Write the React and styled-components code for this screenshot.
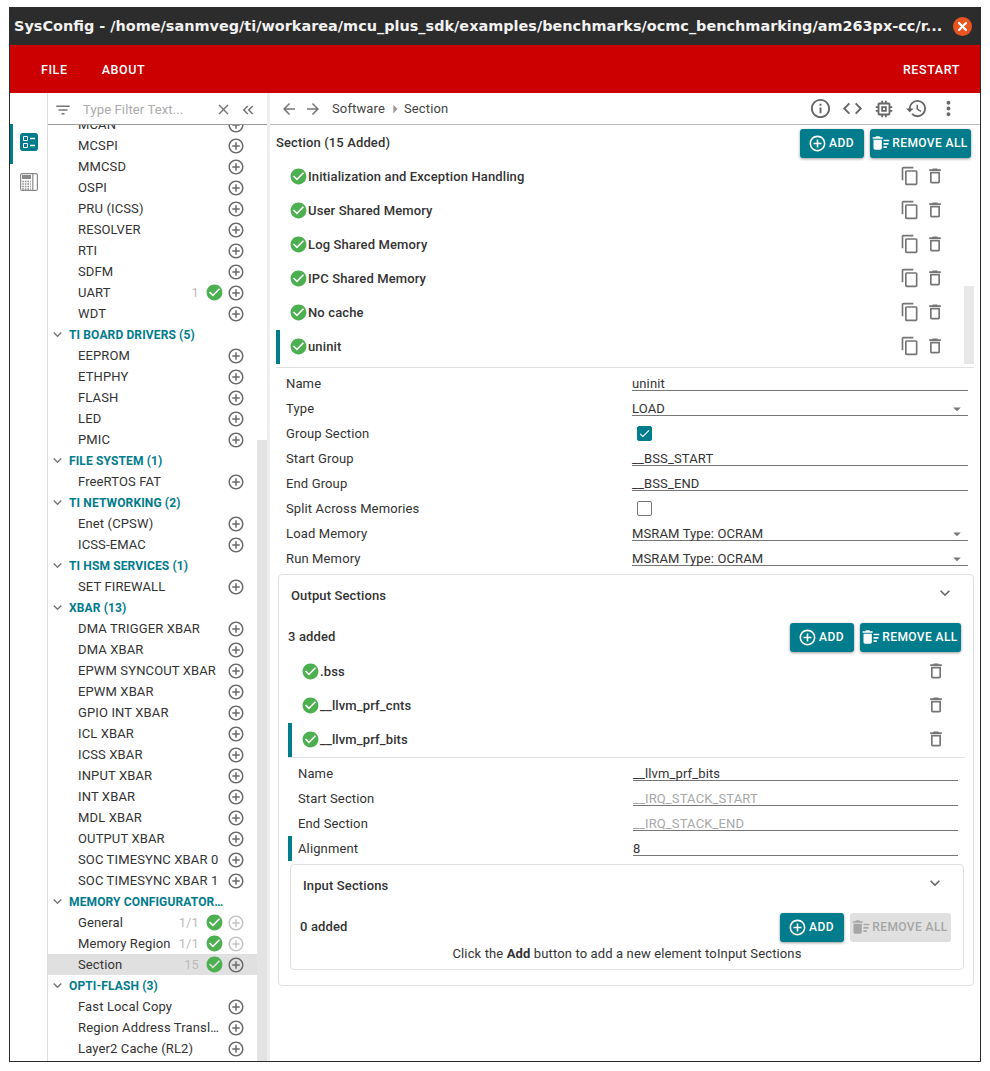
import React from "react";
import styled, { createGlobalStyle } from "styled-components";
import {
  MdArrowBack,
  MdArrowDropDown,
  MdArrowForward,
  MdArrowRight,
  MdCheck,
  MdCheckCircle,
  MdClose,
  MdCode,
  MdContentCopy,
  MdControlPoint,
  MdDeleteSweep,
  MdExpandMore,
  MdFilterList,
  MdInfoOutline,
  MdKeyboardDoubleArrowLeft,
  MdMemory,
  MdMoreVert,
  MdOutlineDelete,
  MdRestore,
} from "react-icons/md";

const TEAL = "#007c8c";

const GlobalStyle = createGlobalStyle`
  html, body { margin: 0; padding: 0; background: #fff; }
  body { font-family: Roboto, "Liberation Sans", sans-serif; color: #333; font-size: 13px; letter-spacing: 0.13px; }
  * { box-sizing: border-box; }
`;

const tree = [
  { name: "MCAN" }, { name: "MCSPI" }, { name: "MMCSD" }, { name: "OSPI" }, { name: "PRU (ICSS)" },
  { name: "RESOLVER" }, { name: "RTI" }, { name: "SDFM" }, { name: "UART", count: "1", ok: true }, { name: "WDT" },
  { group: "TI BOARD DRIVERS (5)" },
  { name: "EEPROM" }, { name: "ETHPHY" }, { name: "FLASH" }, { name: "LED" }, { name: "PMIC" },
  { group: "FILE SYSTEM (1)" },
  { name: "FreeRTOS FAT" },
  { group: "TI NETWORKING (2)" },
  { name: "Enet (CPSW)" }, { name: "ICSS-EMAC" },
  { group: "TI HSM SERVICES (1)" },
  { name: "SET FIREWALL" },
  { group: "XBAR (13)" },
  { name: "DMA TRIGGER XBAR" }, { name: "DMA XBAR" }, { name: "EPWM SYNCOUT XBAR" }, { name: "EPWM XBAR" },
  { name: "GPIO INT XBAR" }, { name: "ICL XBAR" }, { name: "ICSS XBAR" }, { name: "INPUT XBAR" },
  { name: "INT XBAR" }, { name: "MDL XBAR" }, { name: "OUTPUT XBAR" }, { name: "SOC TIMESYNC XBAR 0" },
  { name: "SOC TIMESYNC XBAR 1" },
  { group: "MEMORY CONFIGURATOR…" },
  { name: "General", count: "1/1", ok: true, off: true },
  { name: "Memory Region", count: "1/1", ok: true, off: true },
  { name: "Section", count: "15", ok: true, selected: true },
  { group: "OPTI-FLASH (3)" },
  { name: "Fast Local Copy" }, { name: "Region Address Transl…" }, { name: "Layer2 Cache (RL2)" },
];

const sections = [
  "Initialization and Exception Handling",
  "User Shared Memory",
  "Log Shared Memory",
  "IPC Shared Memory",
  "No cache",
  "uninit",
];

const Window = styled.div`
  margin: 7px 0 0 9px;
  width: 972px;
  height: 1055px;
  border: 1px solid #2c2c2c;
  border-top: none;
  display: flex;
  flex-direction: column;
  overflow: hidden;
`;

const TitleBar = styled.div`
  height: 38px;
  margin: 0 -1px;
  background: #2c2c2c;
  color: #f2f2f2;
  display: flex;
  align-items: center;
  justify-content: space-between;
  padding: 0 9px 0 5px;
  font-family: "DejaVu Sans", sans-serif;
  font-weight: 700;
  font-size: 14.45px;
  letter-spacing: 0;
  white-space: nowrap;
`;

const CloseDot = styled.span`
  width: 19px;
  height: 19px;
  border-radius: 50%;
  background: #e95420;
  display: flex;
  align-items: center;
  justify-content: center;
`;

const MenuBar = styled.div`
  height: 48px;
  background: #cc0000;
  color: #fff;
  display: flex;
  align-items: center;
  padding: 0 20px 0 31px;
  font-weight: 500;
  font-size: 12.5px;
  letter-spacing: 0.6px;
`;

const MenuItem = styled.span`
  margin-right: 34px;
  margin-left: ${(p) => (p.$right ? "auto" : "0")};
  ${(p) => p.$right && "margin-right: 0;"}
`;

const Body = styled.div`
  flex: 1;
  display: flex;
  min-height: 0;
`;

const Rail = styled.div`
  width: 38px;
  border-right: 1px solid #ddd;
  padding-top: 31px;
  flex-shrink: 0;
`;

const RailItem = styled.div`
  height: 40px;
  display: flex;
  align-items: center;
  justify-content: center;
  border-left: 3px solid ${(p) => (p.$active ? TEAL : "transparent")};
  padding: 0 2px 4px 0;
`;

const TreePanel = styled.div`
  width: 222px;
  border-right: 3px solid #eee;
  display: flex;
  flex-direction: column;
  flex-shrink: 0;
  min-height: 0;
`;

const FilterBar = styled.div`
  height: 32px;
  border-bottom: 1px solid #999;
  display: flex;
  align-items: center;
  padding: 2px 10px 0 6px;
  color: #757575;
  flex-shrink: 0;
`;

const FilterHint = styled.span`
  flex: 1;
  margin-left: 11px;
  color: #aaa;
  font-size: 13px;
`;

const TreeBody = styled.div`
  flex: 1;
  display: flex;
  overflow: hidden;
  min-height: 0;
`;

const TreeList = styled.div`
  flex: 1;
  margin-top: -11px;
  min-width: 0;
`;

const TreeGroup = styled.div`
  height: 21px;
  display: flex;
  align-items: center;
  padding-left: 1px;
  color: ${TEAL};
  font-weight: 700;
  font-size: 12px;
  white-space: nowrap;
  svg { color: #777; margin-right: 3px; }
`;

const TreeRow = styled.div`
  height: 21px;
  display: flex;
  align-items: center;
  padding-left: 30px;
  background: ${(p) => (p.$selected ? "#e0e0e0" : "transparent")};
  white-space: nowrap;
  font-size: 13px;
  color: #333;
`;

const TreeName = styled.span`
  flex: 1;
`;

const TreeCount = styled.span`
  color: #bbb;
  margin-right: 6px;
`;

const TreeAdd = styled.span`
  width: 20px;
  margin: 0 11px 0 2px;
  display: flex;
  justify-content: center;
  color: ${(p) => (p.$off ? "#c4c4c4" : "#6a6a6a")};
`;

const ScrollTrack = styled.div`
  width: 10px;
  flex-shrink: 0;
  padding-top: ${(p) => p.$top}px;
  display: flex;
`;

const ScrollThumb = styled.div`
  width: 10px;
  background: #e3e3e3;
`;

const Main = styled.div`
  flex: 1;
  min-width: 0;
  display: flex;
  flex-direction: column;
`;

const NavBar = styled.div`
  height: 32px;
  border-bottom: 1px solid #bbb;
  display: flex;
  align-items: center;
  padding: 0 20px 0 10px;
  color: #757575;
  flex-shrink: 0;
`;

const Crumb = styled.span`
  color: #444;
  font-size: 13px;
`;

const NavIcons = styled.div`
  margin-left: auto;
  display: flex;
  gap: 8px;
  align-items: center;
`;

const NavIcon = styled.span`
  width: 24px;
  display: flex;
  justify-content: center;
  color: #666;
`;

const Content = styled.div`
  padding-left: 6px;
  padding-right: 6px;
`;

const ListHeader = styled.div`
  display: flex;
  align-items: center;
  height: ${(p) => p.$height}px;
  gap: 6px;
  padding-right: ${(p) => p.$right || 3}px;
  padding-left: ${(p) => p.$left || 0}px;
  padding-top: 2px;
`;

const HeaderTitle = styled.div`
  flex: 1;
  font-weight: 500;
  font-size: 13px;
  color: #333;
  margin-top: -3px;
`;

const Button = styled.div`
  height: 29px;
  width: ${(p) => p.$width}px;
  border-radius: 3px;
  background: ${(p) => (p.$disabled ? "#e0e0e0" : TEAL)};
  color: ${(p) => (p.$disabled ? "#a6a6a6" : "#fff")};
  box-shadow: ${(p) => (p.$disabled ? "none" : "0 1px 3px rgba(0,0,0,.4)")};
  display: flex;
  align-items: center;
  justify-content: center;
  gap: ${(p) => p.$gap}px;
  padding: 0 ${(p) => p.$pad}px 1px 0;
  font-weight: 500;
  font-size: 12px;
  letter-spacing: 0.4px;
  white-space: nowrap;
`;

const Rows = styled.div`
  position: relative;
  margin: ${(p) => p.$margin || 0};
`;

const ItemRow = styled.div`
  height: 34px;
  display: flex;
  align-items: center;
  border-left: 4px solid ${(p) => (p.$active ? TEAL : "transparent")};
  padding-left: ${(p) => p.$indent}px;
  padding-right: ${(p) => p.$right}px;
  padding-bottom: 2px;
  font-weight: 500;
  font-size: 13px;
  color: #333;
`;

const ItemName = styled.span`
  flex: 1;
`;

const ItemActions = styled.div`
  display: flex;
  align-items: center;
  gap: 5px;
  color: #757575;
`;

const ListScrollThumb = styled.div`
  position: absolute;
  right: 0;
  top: 126px;
  bottom: 0;
  width: 10px;
  background: #e8e8e8;
`;

const Divider = styled.div`
  border-bottom: 1px solid #e0e0e0;
  margin: ${(p) => p.$margin};
`;

const FormRow = styled.div`
  height: 25px;
  display: grid;
  grid-template-columns: ${(p) => p.$label}px 1fr;
  padding-left: ${(p) => p.$left}px;
  padding-right: ${(p) => p.$right}px;
  margin-left: ${(p) => p.$offset || 0}px;
  align-items: center;
  font-size: 13px;
  color: #333;
  border-left: ${(p) => (p.$active ? `4px solid ${TEAL}` : "none")};
`;

const Field = styled.div`
  align-self: start;
  height: 20px;
  border-bottom: 1px solid #777;
  display: flex;
  align-items: flex-end;
  justify-content: space-between;
  line-height: 13px;
  color: ${(p) => (p.$muted ? "#a8a8a8" : "#333")};
  font-size: 13px;
  svg { color: #777; margin: 0 2px 0 0; align-self: flex-start; position: relative; top: 4px; }
`;

const Checked = styled.span`
  width: 15px;
  height: 15px;
  margin-left: 5px;
  border-radius: 2px;
  background: ${(p) => (p.$on ? TEAL : "#fff")};
  border: 1.5px solid ${(p) => (p.$on ? TEAL : "#757575")};
  color: #fff;
  display: flex;
  align-items: center;
  justify-content: center;
`;

const Card = styled.div`
  border: 1px solid #e0e0e0;
  border-radius: 4px;
  margin: ${(p) => p.$margin};
  height: ${(p) => p.$height}px;
`;

const CardHeader = styled.div`
  height: 40px;
  display: flex;
  align-items: center;
  justify-content: space-between;
  padding: 0 18px 0 12px;
  font-weight: 500;
  font-size: 13px;
  color: #333;
  svg { color: #666; margin-top: -4px; }
`;

const EmptyNote = styled.div`
  text-align: center;
  font-size: 13px;
  line-height: 15px;
  color: #333;
  margin-top: -2px;
  b { font-weight: 700; }
`;

const OkIcon = () => <MdCheckCircle size={19} color="#4caf50" />;

const BoardIcon = () => (
  <svg width="18" height="18" viewBox="0 0 18 18">
    <rect width="18" height="18" rx="3" fill={TEAL} />
    <path d="M3.5 3.5h4v4h-4zM3.5 10.5h4v4h-4z" fill="none" stroke="#fff" strokeWidth="1" />
    <path d="M10 5.5h5M10 12.5h5" stroke="#fff" strokeWidth="1.5" />
  </svg>
);

const CalcIcon = () => (
  <svg width="18" height="18" viewBox="0 0 18 18" fill="none" stroke="#8a8a8a" strokeWidth="1.2">
    <rect x="0.6" y="0.6" width="16.8" height="16.8" rx="1.5" />
    <path d="M12.8 1v16" />
    <rect x="2" y="2" width="9" height="4" fill="#8a8a8a" stroke="none" />
    <path d="M2.2 8.5h8.6M2.2 11h8.6M2.2 13.5h8.6M2.2 16h8.6" strokeWidth="1.4" strokeDasharray="1.6 1" />
  </svg>
);

const CloseGlyph = () => (
  <svg width="11" height="11" viewBox="0 0 11 11" stroke="#fff" strokeWidth="2.2" strokeLinecap="round">
    <path d="M2 2l7 7M9 2l-7 7" />
  </svg>
);

const AddButton = () => (
  <Button $width={64} $gap={2} $pad={2}>
    <MdControlPoint size={19} />
    ADD
  </Button>
);

const RemoveButton = ({ disabled }) => (
  <Button $width={101} $gap={1} $pad={2} $disabled={disabled}>
    <MdDeleteSweep size={20} />
    REMOVE ALL
  </Button>
);

const TreeItem = ({ item }) => {
  if (item.group) {
    return (
      <TreeGroup>
        <MdExpandMore size={17} />
        {item.group}
      </TreeGroup>
    );
  }
  return (
    <TreeRow $selected={item.selected}>
      <TreeName>{item.name}</TreeName>
      {item.count && <TreeCount>{item.count}</TreeCount>}
      {item.ok && <OkIcon />}
      <TreeAdd $off={item.off}>
        <MdControlPoint size={18} />
      </TreeAdd>
    </TreeRow>
  );
};

const App = () => {
  return (
    <>
      <GlobalStyle />
      <Window>
        <TitleBar>
          <span>SysConfig - /home/sanmveg/ti/workarea/mcu_plus_sdk/examples/benchmarks/ocmc_benchmarking/am263px-cc/r...</span>
          <CloseDot>
            <CloseGlyph />
          </CloseDot>
        </TitleBar>
        <MenuBar>
          <MenuItem>FILE</MenuItem>
          <MenuItem>ABOUT</MenuItem>
          <MenuItem $right>RESTART</MenuItem>
        </MenuBar>
        <Body>
          <Rail>
            <RailItem $active>
              <BoardIcon />
            </RailItem>
            <RailItem>
              <CalcIcon />
            </RailItem>
          </Rail>
          <TreePanel>
            <FilterBar>
              <MdFilterList size={18} />
              <FilterHint>Type Filter Text...</FilterHint>
              <MdClose size={17} style={{ marginRight: 7 }} />
              <MdKeyboardDoubleArrowLeft size={18} />
            </FilterBar>
            <TreeBody>
              <TreeList>
                {tree.map((item, i) => (
                  <TreeItem key={i} item={item} />
                ))}
              </TreeList>
              <ScrollTrack $top={315}>
                <ScrollThumb />
              </ScrollTrack>
            </TreeBody>
          </TreePanel>
          <Main>
            <NavBar>
              <MdArrowBack size={18} />
              <MdArrowForward size={18} style={{ marginLeft: 6, marginRight: 10 }} />
              <Crumb>Software</Crumb>
              <MdArrowRight size={20} style={{ color: "#999", marginRight: -1 }} />
              <Crumb>Section</Crumb>
              <NavIcons>
                <NavIcon>
                  <MdInfoOutline size={23} />
                </NavIcon>
                <NavIcon>
                  <MdCode size={23} />
                </NavIcon>
                <NavIcon>
                  <MdMemory size={22} />
                </NavIcon>
                <NavIcon>
                  <MdRestore size={23} />
                </NavIcon>
                <NavIcon>
                  <MdMoreVert size={23} />
                </NavIcon>
              </NavIcons>
            </NavBar>
            <Content>
              <ListHeader $height={35}>
                <HeaderTitle>Section (15 Added)</HeaderTitle>
                <AddButton />
                <RemoveButton />
              </ListHeader>
              <Rows>
                {sections.map((name, i) => (
                  <ItemRow key={name} $active={i === 5} $indent={9} $right={26}>
                    <OkIcon />
                    <ItemName>{name}</ItemName>
                    <ItemActions style={{ marginRight: 3 }}>
                      <MdContentCopy size={20} />
                      <MdOutlineDelete size={20} />
                    </ItemActions>
                  </ItemRow>
                ))}
                <ListScrollThumb />
              </Rows>
              <Divider $margin="3px 0" />
              {[
                ["Name", "uninit"],
                ["Type", "LOAD", "select"],
                ["Group Section", true, "check"],
                ["Start Group", "__BSS_START"],
                ["End Group", "__BSS_END"],
                ["Split Across Memories", false, "check"],
                ["Load Memory", "MSRAM Type: OCRAM", "select"],
                ["Run Memory", "MSRAM Type: OCRAM", "select"],
              ].map(([label, value, kind]) => (
                <FormRow key={label} $label={346} $left={10} $right={6}>
                  <span>{label}</span>
                  {kind === "check" ? (
                    <Checked $on={value}>{value && <MdCheck size={13} />}</Checked>
                  ) : (
                    <Field>
                      {value}
                      {kind === "select" && <MdArrowDropDown size={18} />}
                    </Field>
                  )}
                </FormRow>
              ))}
              <Card $margin="3px 0 0 2px" $height={412}>
                <CardHeader>
                  Output Sections
                  <MdExpandMore size={20} />
                </CardHeader>
                <ListHeader $height={43} $right={12} $left={9}>
                  <HeaderTitle>3 added</HeaderTitle>
                  <AddButton />
                  <RemoveButton />
                </ListHeader>
                <Rows $margin="-3px 8px 0 9px">
                  {[".bss", "__llvm_prf_cnts", "__llvm_prf_bits"].map((name, i) => (
                    <ItemRow key={name} $active={i === 2} $indent={9} $right={19}>
                      <OkIcon />
                      <ItemName>{name}</ItemName>
                      <ItemActions>
                        <MdOutlineDelete size={20} />
                      </ItemActions>
                    </ItemRow>
                  ))}
                </Rows>
                <Divider $margin="0 8px 3px 9px" />
                {[
                  ["Name", "__llvm_prf_bits"],
                  ["Start Section", "__IRQ_STACK_START", true],
                  ["End Section", "__IRQ_STACK_END", true],
                  ["Alignment", "8"],
                ].map(([label, value, muted]) => {
                  const active = label === "Alignment";
                  return (
                    <FormRow
                      key={label}
                      $label={335}
                      $left={active ? 6 : 19}
                      $right={15}
                      $active={active}
                      $offset={active ? 9 : 0}
                    >
                      <span>{label}</span>
                      <Field $muted={muted}>{value}</Field>
                    </FormRow>
                  );
                })}
                <Card $margin="3px 9px 0 11px" $height={106}>
                  <CardHeader>
                    Input Sections
                    <MdExpandMore size={20} />
                  </CardHeader>
                  <ListHeader $height={43} $right={12} $left={9}>
                    <HeaderTitle>0 added</HeaderTitle>
                    <AddButton />
                    <RemoveButton disabled />
                  </ListHeader>
                  <EmptyNote>
                    Click the <b>Add</b> button to add a new element toInput Sections
                  </EmptyNote>
                </Card>
              </Card>
            </Content>
          </Main>
        </Body>
      </Window>
    </>
  );
};

export default App;
